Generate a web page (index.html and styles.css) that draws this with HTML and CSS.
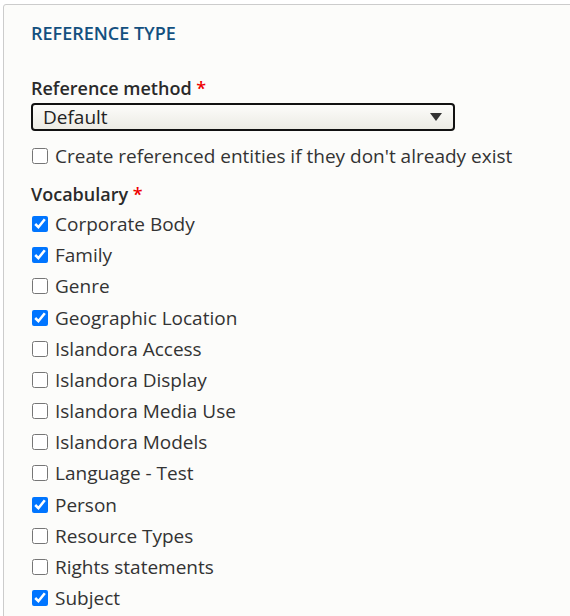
FILE: index.html
```html
<!DOCTYPE html>
<html lang="en">
	<head>
		<title>Reference type</title>
		<link rel="stylesheet" href="styles.css">
	</head>
	<body>
		<fieldset class="panel">
			<h2 class="panel-title">REFERENCE TYPE</h2>
			<div class="form-item">
				<label class="form-label" for="method">Reference method <span class="required">*</span></label>
				<div class="select">
					<span>Default</span>
					<svg class="select-arrow" width="12" height="8" viewBox="0 0 12 8"><path d="M0 0 H12 L6 8 Z" fill="#333"/></svg>
				</div>
			</div>
			<label class="check create">
				<input type="checkbox">
				<span>Create referenced entities if they don't already exist</span>
			</label>
			<div class="form-item vocab">
				<div class="form-label">Vocabulary <span class="required">*</span></div>
				<label class="check"><input type="checkbox" checked><span>Corporate Body</span></label>
				<label class="check"><input type="checkbox" checked><span>Family</span></label>
				<label class="check"><input type="checkbox"><span>Genre</span></label>
				<label class="check"><input type="checkbox" checked><span>Geographic Location</span></label>
				<label class="check"><input type="checkbox"><span>Islandora Access</span></label>
				<label class="check"><input type="checkbox"><span>Islandora Display</span></label>
				<label class="check"><input type="checkbox"><span>Islandora Media Use</span></label>
				<label class="check"><input type="checkbox"><span>Islandora Models</span></label>
				<label class="check"><input type="checkbox"><span>Language - Test</span></label>
				<label class="check"><input type="checkbox" checked><span>Person</span></label>
				<label class="check"><input type="checkbox"><span>Resource Types</span></label>
				<label class="check"><input type="checkbox"><span>Rights statements</span></label>
				<label class="check"><input type="checkbox" checked><span>Subject</span></label>
			</div>
		</fieldset>
	</body>
</html>
```

FILE: styles.css
```css
body {
	margin: 0;
	background-color: #fff;
	font-family: "Open Sans", sans-serif;
	color: #222;
	overflow: hidden;
	height: 616px;
}

.panel {
	margin: 4px -10px 0 3px;
	padding: 17px 27px 0 27px;
	border: 1px solid #ccc;
	border-radius: 3px;
	background-color: #fcfcfa;
	height: 700px;
	min-width: 0;
}

.panel-title {
	margin: 0 0 32px 0;
	font-size: 18px;
	line-height: 22px;
	font-weight: 600;
	color: #13507f;
}

.form-label {
	display: block;
	font-size: 18px;
	font-weight: 600;
	line-height: 24px;
	color: #2a2a2a;
}

.required {
	color: #e00;
}

.select {
	box-sizing: border-box;
	display: flex;
	align-items: center;
	justify-content: space-between;
	width: 424px;
	height: 28px;
	margin-top: 3px;
	padding: 0 11px 0 10px;
	border: 2px solid #111;
	border-radius: 4px;
	background: linear-gradient(#fcfcfa, #ecebe4);
	font-size: 19px;
}

.check {
	display: flex;
	align-items: center;
	gap: 7px;
	height: 31.17px;
	font-size: 19px;
	color: #333;
}

.check input {
	width: 16px;
	height: 16px;
	margin: 0 0 0 1px;
}

.create {
	margin-top: 9.5px;
}

.vocab {
	margin-top: 10.5px;
}

.vocab .form-label {
	margin-bottom: 2.4px;
}
```
